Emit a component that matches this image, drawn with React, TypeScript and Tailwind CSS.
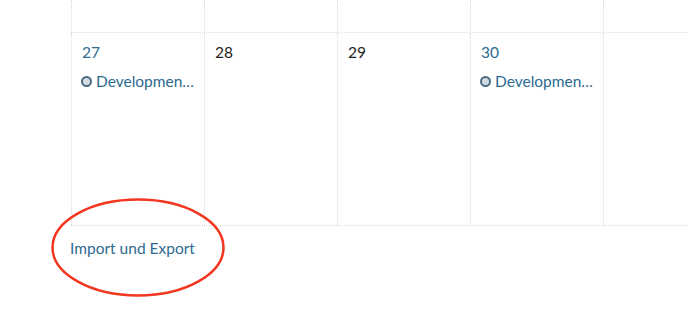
import React from 'react';

const days = [
  { day: '27', highlight: true, event: 'Development Meeting' },
  { day: '28', highlight: false },
  { day: '29', highlight: false },
  { day: '30', highlight: true, event: 'Development Meeting' },
  { day: '', highlight: false },
];

function EventItem({ title }: { title: string }) {
  return (
    <div className="flex items-center gap-[4px] mt-[9px] pl-[9px] pr-[9px] min-w-0">
      <span className="shrink-0 w-[11px] h-[11px] rounded-full border-2 border-[#4d6b80] bg-[#d3dce3]" />
      <span className="truncate text-[#2d6a8f]">{title}</span>
    </div>
  );
}

export default function App() {
  return (
    <div
      className="relative h-[327px] w-full overflow-hidden bg-white text-[15.5px] leading-[20px]"
      style={{ fontFamily: 'Lato, "Noto Sans", sans-serif' }}
    >
      <div className="pl-[71px]">
        <div className="w-[900px]">
          <div className="flex h-[33px] border-b border-dotted border-[#dcdcdc]">
            {days.map((d, i) => (
              <div key={i} className="w-[133px] shrink-0 border-l border-dotted border-[#dcdcdc]" />
            ))}
          </div>
          <div className="flex h-[193px] border-b border-dotted border-[#dcdcdc]">
            {days.map((d, i) => (
              <div key={i} className="w-[133px] shrink-0 border-l border-dotted border-[#dcdcdc] pt-[9px] min-w-0">
                <div className={`pl-[10px] ${d.highlight ? 'text-[#2d6a8f]' : 'text-[#1f1f1f]'}`}>{d.day}</div>
                {d.event && <EventItem title={d.event} />}
              </div>
            ))}
          </div>
        </div>
      </div>

      <div className="pl-[70px] pt-[12px]">
        <a href="#" className="text-[#2d6a8f]">Import und Export</a>
      </div>

      <svg className="absolute left-0 top-0 pointer-events-none" width="688" height="327">
        <ellipse cx="138" cy="247.5" rx="85.5" ry="48" fill="none" stroke="#f2361f" strokeWidth="2.5" />
      </svg>
    </div>
  );
}
